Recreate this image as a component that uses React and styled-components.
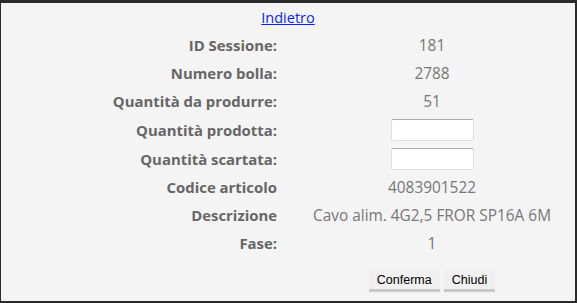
import styled, { createGlobalStyle } from "styled-components";

const Global = createGlobalStyle`
  html, body {
    margin: 0;
    padding: 0;
    background: #2b2b2b;
  }
  #root {
    padding: 3px 2px 2px 1px;
  }
`;

const Panel = styled.div`
  background: #f4f4f4;
  height: 298px;
  font-family: "Open Sans", "Noto Sans", sans-serif;
  font-size: 14px;
`;

const BackRow = styled.div`
  height: 28px;
  display: flex;
  align-items: center;
  justify-content: center;
  font-size: 14.5px;

  a {
    color: #0a1fff;
    text-decoration: underline;
  }
`;

const Form = styled.div`
  display: grid;
  grid-template-columns: 288px 286px;
`;

const Label = styled.div`
  height: ${(p) => (p.$tall ? 29 : 28)}px;
  display: flex;
  align-items: center;
  justify-content: flex-end;
  padding-right: 12px;
  font-size: 14.9px;
  font-weight: 700;
  color: #666;
`;

const Value = styled.div`
  height: ${(p) => (p.$tall ? 29 : 28)}px;
  display: flex;
  align-items: center;
  justify-content: center;
  font-size: 15.4px;
  color: #777;
`;

const Input = styled.input`
  box-sizing: border-box;
  width: 83px;
  height: 22px;
  background: #fff;
  border: 1px solid #dedede;
  border-top-color: #ababab;
  border-radius: 2px;
  outline: none;
`;

const Actions = styled.div`
  grid-column: 2;
  display: flex;
  justify-content: center;
  gap: 4px;
  margin-top: 14px;
`;

const Button = styled.button`
  font-family: "Liberation Sans", Arial, sans-serif;
  font-size: 12.5px;
  color: #000;
  background: #f0f0f0;
  border: none;
  border-bottom: 3px solid #c8c8c8;
  padding: 0 8px;
  height: 21px;
  cursor: pointer;
`;

const rows = [
  { label: "ID Sessione:", value: "181" },
  { label: "Numero bolla:", value: "2788" },
  { label: "Quantità da produrre:", value: "51" },
  { label: "Quantità prodotta:", input: true },
  { label: "Quantità scartata:", input: true },
  { label: "Codice articolo", value: "4083901522" },
  { label: "Descrizione", value: "Cavo alim. 4G2,5 FROR SP16A 6M" },
  { label: "Fase:", value: "1" },
];

export default function App() {
  return (
    <>
      <Global />
      <Panel>
        <BackRow>
          <a href="#">Indietro</a>
        </BackRow>
        <Form>
          {rows.map((r) => (
            <>
              <Label key={r.label + "l"} $tall={r.input}>{r.label}</Label>
              <Value key={r.label + "v"} $tall={r.input}>
                {r.input ? <Input type="text" /> : r.value}
              </Value>
            </>
          ))}
          <Actions>
            <Button>Conferma</Button>
            <Button>Chiudi</Button>
          </Actions>
        </Form>
      </Panel>
    </>
  );
}
